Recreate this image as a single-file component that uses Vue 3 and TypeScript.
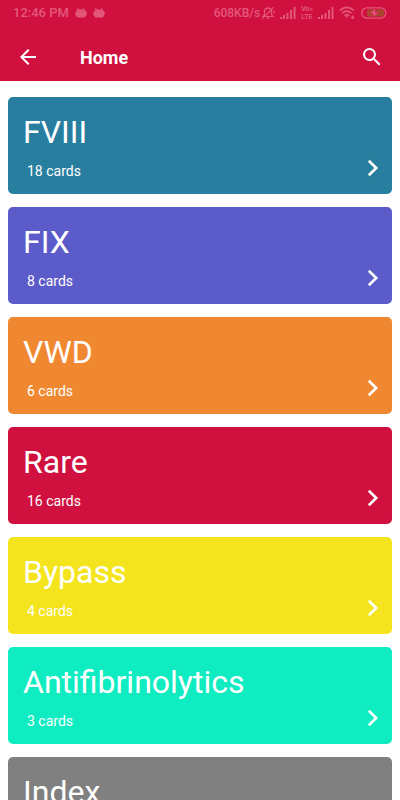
<script setup lang="ts">
interface Deck {
  name: string
  count?: string
  tone: string
}

const decks: Deck[] = [
  { name: 'FVIII', count: '18 cards', tone: 'teal' },
  { name: 'FIX', count: '8 cards', tone: 'indigo' },
  { name: 'VWD', count: '6 cards', tone: 'orange' },
  { name: 'Rare', count: '16 cards', tone: 'red' },
  { name: 'Bypass', count: '4 cards', tone: 'yellow' },
  { name: 'Antifibrinolytics', count: '3 cards', tone: 'mint' },
  { name: 'Index', tone: 'grey' },
]
</script>

<template>
  <div class="screen">
    <header class="header">
      <div class="status">
        <div class="status-left">
          <span class="clock">12:46 PM</span>
          <svg v-for="n in 2" :key="n" width="12" height="10" viewBox="0 0 12 10">
            <path d="M2.2 .3 3.8 2.2M9.4 .3 8.2 2.2M0 6.200h1.500M10.500 5.200H12" stroke="currentColor" stroke-width="1.200" />
            <path fill="currentColor" fill-rule="evenodd" d="M3.2 1.4h5.6L11.300 3.500v3.800L9.600 9.400H2.400L.7 7.300V3.500zM3.700 3.400v.8h.8v-.8zM7.500 3.400v.8h.8v-.8z" />
          </svg>
        </div>
        <div class="status-right">
          <span class="speed">608KB/s</span>
          <svg width="14" height="14" viewBox="0 0 14 14" fill="none" stroke="currentColor" stroke-width="1.200">
            <path d="M2 10.500h10L10.600 9V5.700C10.600 3.500 9 2.200 7 2.200S3.400 3.500 3.400 5.700V9zM5.600 12.200h2.800M7 .8v1.400M12.800 1.200 1.200 12.800M13 4.500v3" />
          </svg>
          <svg width="16" height="12" viewBox="0 0 16 12" fill="currentColor">
            <path d="M0 10h2v2H0zM3 8h2v4H3zM6.500 6h2v6h-2zM10 3h2v9h-2zM13.500 0h2v12h-2z" />
          </svg>
          <span class="volte"><span>Vo»</span><span>LTE</span></span>
          <svg width="16" height="12" viewBox="0 0 16 12" fill="currentColor">
            <path d="M0 10h2v2H0zM3 8h2v4H3zM6.500 6h2v6h-2zM10 3h2v9h-2zM13.500 0h2v12h-2z" />
          </svg>
          <svg width="17" height="13" viewBox="0 0 17 13" fill="none" stroke="currentColor" stroke-width="1.700">
            <path d="M.8 4.400Q7.800 -1.600 14.800 4.400M3.200 7.200Q7.800 3 12.400 7.200M5.400 9.800Q7.800 7.600 10.200 9.800" />
            <path d="M7.800 10v2M13.600 9.500v3M12.200 11l1.400 1.500L15 11" stroke-width="1.300" />
          </svg>
          <svg width="26" height="12" viewBox="0 0 26 12">
            <rect x="6" y="2.500" width="17" height="7" rx="2.500" fill="#a8482f" />
            <rect x=".8" y=".8" width="24" height="10.400" rx="5.200" fill="none" stroke="currentColor" stroke-width="1.300" />
            <path d="M15 .8 8.500 6.800h4L10.500 11.400 18 5.300h-4z" fill="currentColor" stroke="#d01140" stroke-width=".5" />
          </svg>
        </div>
      </div>
      <div class="bar">
        <button class="icon-button" type="button" aria-label="Back">
          <svg width="24" height="24" viewBox="0 0 24 24" fill="#fff">
            <path d="M20 11H7.830l5.590-5.590L12 4l-8 8 8 8 1.410-1.410L7.830 13H20z" />
          </svg>
        </button>
        <h1 class="title">Home</h1>
        <button class="icon-button" type="button" aria-label="Search">
          <svg width="24" height="24" viewBox="0 0 24 24" fill="#fff">
            <path d="M15.500 14h-.790l-.280-.270A6.470 6.470 0 0 0 16 9.500 6.500 6.500 0 1 0 9.500 16c1.610 0 3.090-.590 4.230-1.570l.270.280v.790l5 4.990L20.490 19zm-6 0C7.010 14 5 11.990 5 9.500S7.010 5 9.500 5 14 7.010 14 9.500 11.990 14 9.500 14z" />
          </svg>
        </button>
      </div>
    </header>

    <main class="list">
      <button v-for="deck in decks" :key="deck.name" type="button" class="card" :class="deck.tone">
        <span class="name">{{ deck.name }}</span>
        <span class="meta">
          <span>{{ deck.count }}</span>
          <svg width="12" height="18" viewBox="0 0 12 18" fill="none" stroke="#fff" stroke-width="2.600">
            <path d="M1.800 1.800 9.200 9 1.800 16.200" />
          </svg>
        </span>
      </button>
    </main>
  </div>
</template>

<style>
body {
  margin: 0;
  background: #fff;
}
</style>

<style scoped>
.screen {
  display: flex;
  flex-direction: column;
  height: 100vh;
  overflow: hidden;
  font-family: Roboto, sans-serif;
}

.header {
  flex: none;
  background: #d01140;
  color: #fff;
}

.status {
  display: flex;
  justify-content: space-between;
  align-items: center;
  height: 25px;
  padding: 0 13px;
  color: #e3587a;
  font-weight: 500;
}

.status-left,
.status-right {
  display: flex;
  align-items: center;
}

.status-left {
  gap: 6px;
}

.status-right {
  gap: 5px;
}

.clock {
  font-size: 13px;
  line-height: 24px;
}

.speed {
  margin-right: -4px;
  font-size: 12px;
  line-height: 24px;
}

.volte {
  display: flex;
  flex-direction: column;
  font-size: 7px;
  line-height: 8px;
  font-weight: 700;
}

.bar {
  display: flex;
  align-items: center;
  height: 48px;
  padding: 8px 16px 0;
}

.icon-button {
  display: flex;
  padding: 0;
  border: 0;
  background: none;
  cursor: pointer;
}

.title {
  flex: 1;
  margin: 0 0 0 40px;
  padding-top: 2px;
  font-size: 18px;
  line-height: 20px;
  font-weight: 700;
}

.list {
  display: flex;
  flex: 1;
  flex-direction: column;
  gap: 13px;
  min-height: 0;
  padding: 16px 8px;
  overflow-y: auto;
  scrollbar-width: none;
}

.card {
  display: flex;
  flex: none;
  flex-direction: column;
  gap: 7px;
  padding: 15px 13px 13px 15px;
  border: 0;
  border-radius: 5px;
  color: #fff;
  font-family: inherit;
  text-align: left;
  cursor: pointer;
}

.name {
  font-size: 32px;
  line-height: 40px;
}

.meta {
  display: flex;
  align-items: flex-start;
  justify-content: space-between;
  height: 22px;
  padding-left: 4px;
  font-size: 14px;
  line-height: 24px;
}

.teal { background: #277e9f; }
.indigo { background: #5b5bca; }
.orange { background: #f08832; }
.red { background: #d01140; }
.yellow { background: #f4e41e; }
.mint { background: #10ecc1; }
.grey { background: #808080; }
</style>
